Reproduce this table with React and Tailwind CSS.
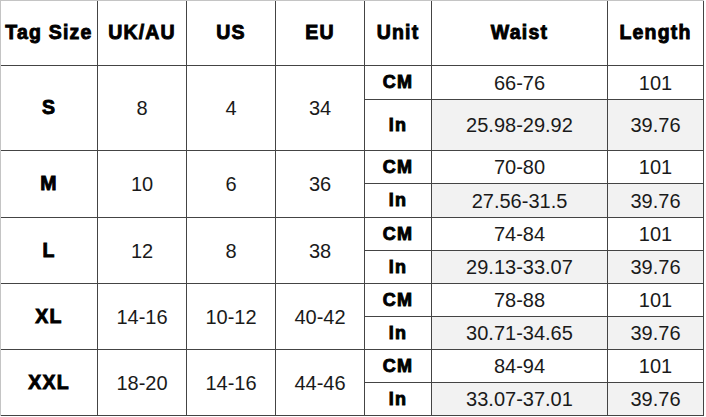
const sizes = [
  { tag: "S", uk: "8", us: "4", eu: "34", cm: "66-76", inch: "25.98-29.92" },
  { tag: "M", uk: "10", us: "6", eu: "36", cm: "70-80", inch: "27.56-31.5" },
  { tag: "L", uk: "12", us: "8", eu: "38", cm: "74-84", inch: "29.13-33.07" },
  { tag: "XL", uk: "14-16", us: "10-12", eu: "40-42", cm: "78-88", inch: "30.71-34.65" },
  { tag: "XXL", uk: "18-20", us: "14-16", eu: "44-46", cm: "84-94", inch: "33.07-37.01" },
];

const heavy =
  "font-bold text-black tracking-[1.2px] [-webkit-text-stroke:0.9px_#000]";
const cell =
  "flex items-center justify-center border-r border-b border-[#444]";
const plain = "text-[20px] text-[#1a1a1a]";

const App = () => {
  return (
    <div className="w-[706px] h-[417px] bg-white font-['Liberation_Sans',Arial,sans-serif]">
      <div className="w-[704px] border-l border-t border-[#c4c4c4]">
        <div className="grid grid-cols-[97px_89px_89px_89px_67px_176px_96px] grid-rows-[65px_34px_51px_33px_34px_33px_33px_33px_33px_33px_33px]">
          {/* header */}
          {["Tag Size", "UK/AU", "US", "EU", "Unit", "Waist", "Length"].map(
            (h, i) => (
              <div
                key={h}
                className={`${cell} ${heavy} ${
                  i === 0 ? "text-[19.5px] tracking-[0.8px]" : "text-[19.5px]"
                }`}
              >
                {h}
              </div>
            )
          )}

          {sizes.map((s) => (
            <div key={s.tag} className="contents">
              <div className={`${cell} row-span-2 ${heavy} text-[19.5px]`}>
                {s.tag}
              </div>
              <div className={`${cell} row-span-2 ${plain}`}>{s.uk}</div>
              <div className={`${cell} row-span-2 ${plain}`}>{s.us}</div>
              <div className={`${cell} row-span-2 ${plain}`}>{s.eu}</div>
              <div className={`${cell} ${heavy} text-[18px]`}>CM</div>
              <div className={`${cell} ${plain}`}>{s.cm}</div>
              <div className={`${cell} ${plain}`}>101</div>
              <div className={`${cell} ${heavy} text-[18px]`}>In</div>
              <div className={`${cell} bg-[#f2f2f2] ${plain}`}>{s.inch}</div>
              <div className={`${cell} bg-[#f2f2f2] ${plain}`}>39.76</div>
            </div>
          ))}
        </div>
      </div>
    </div>
  );
};

export default App;
